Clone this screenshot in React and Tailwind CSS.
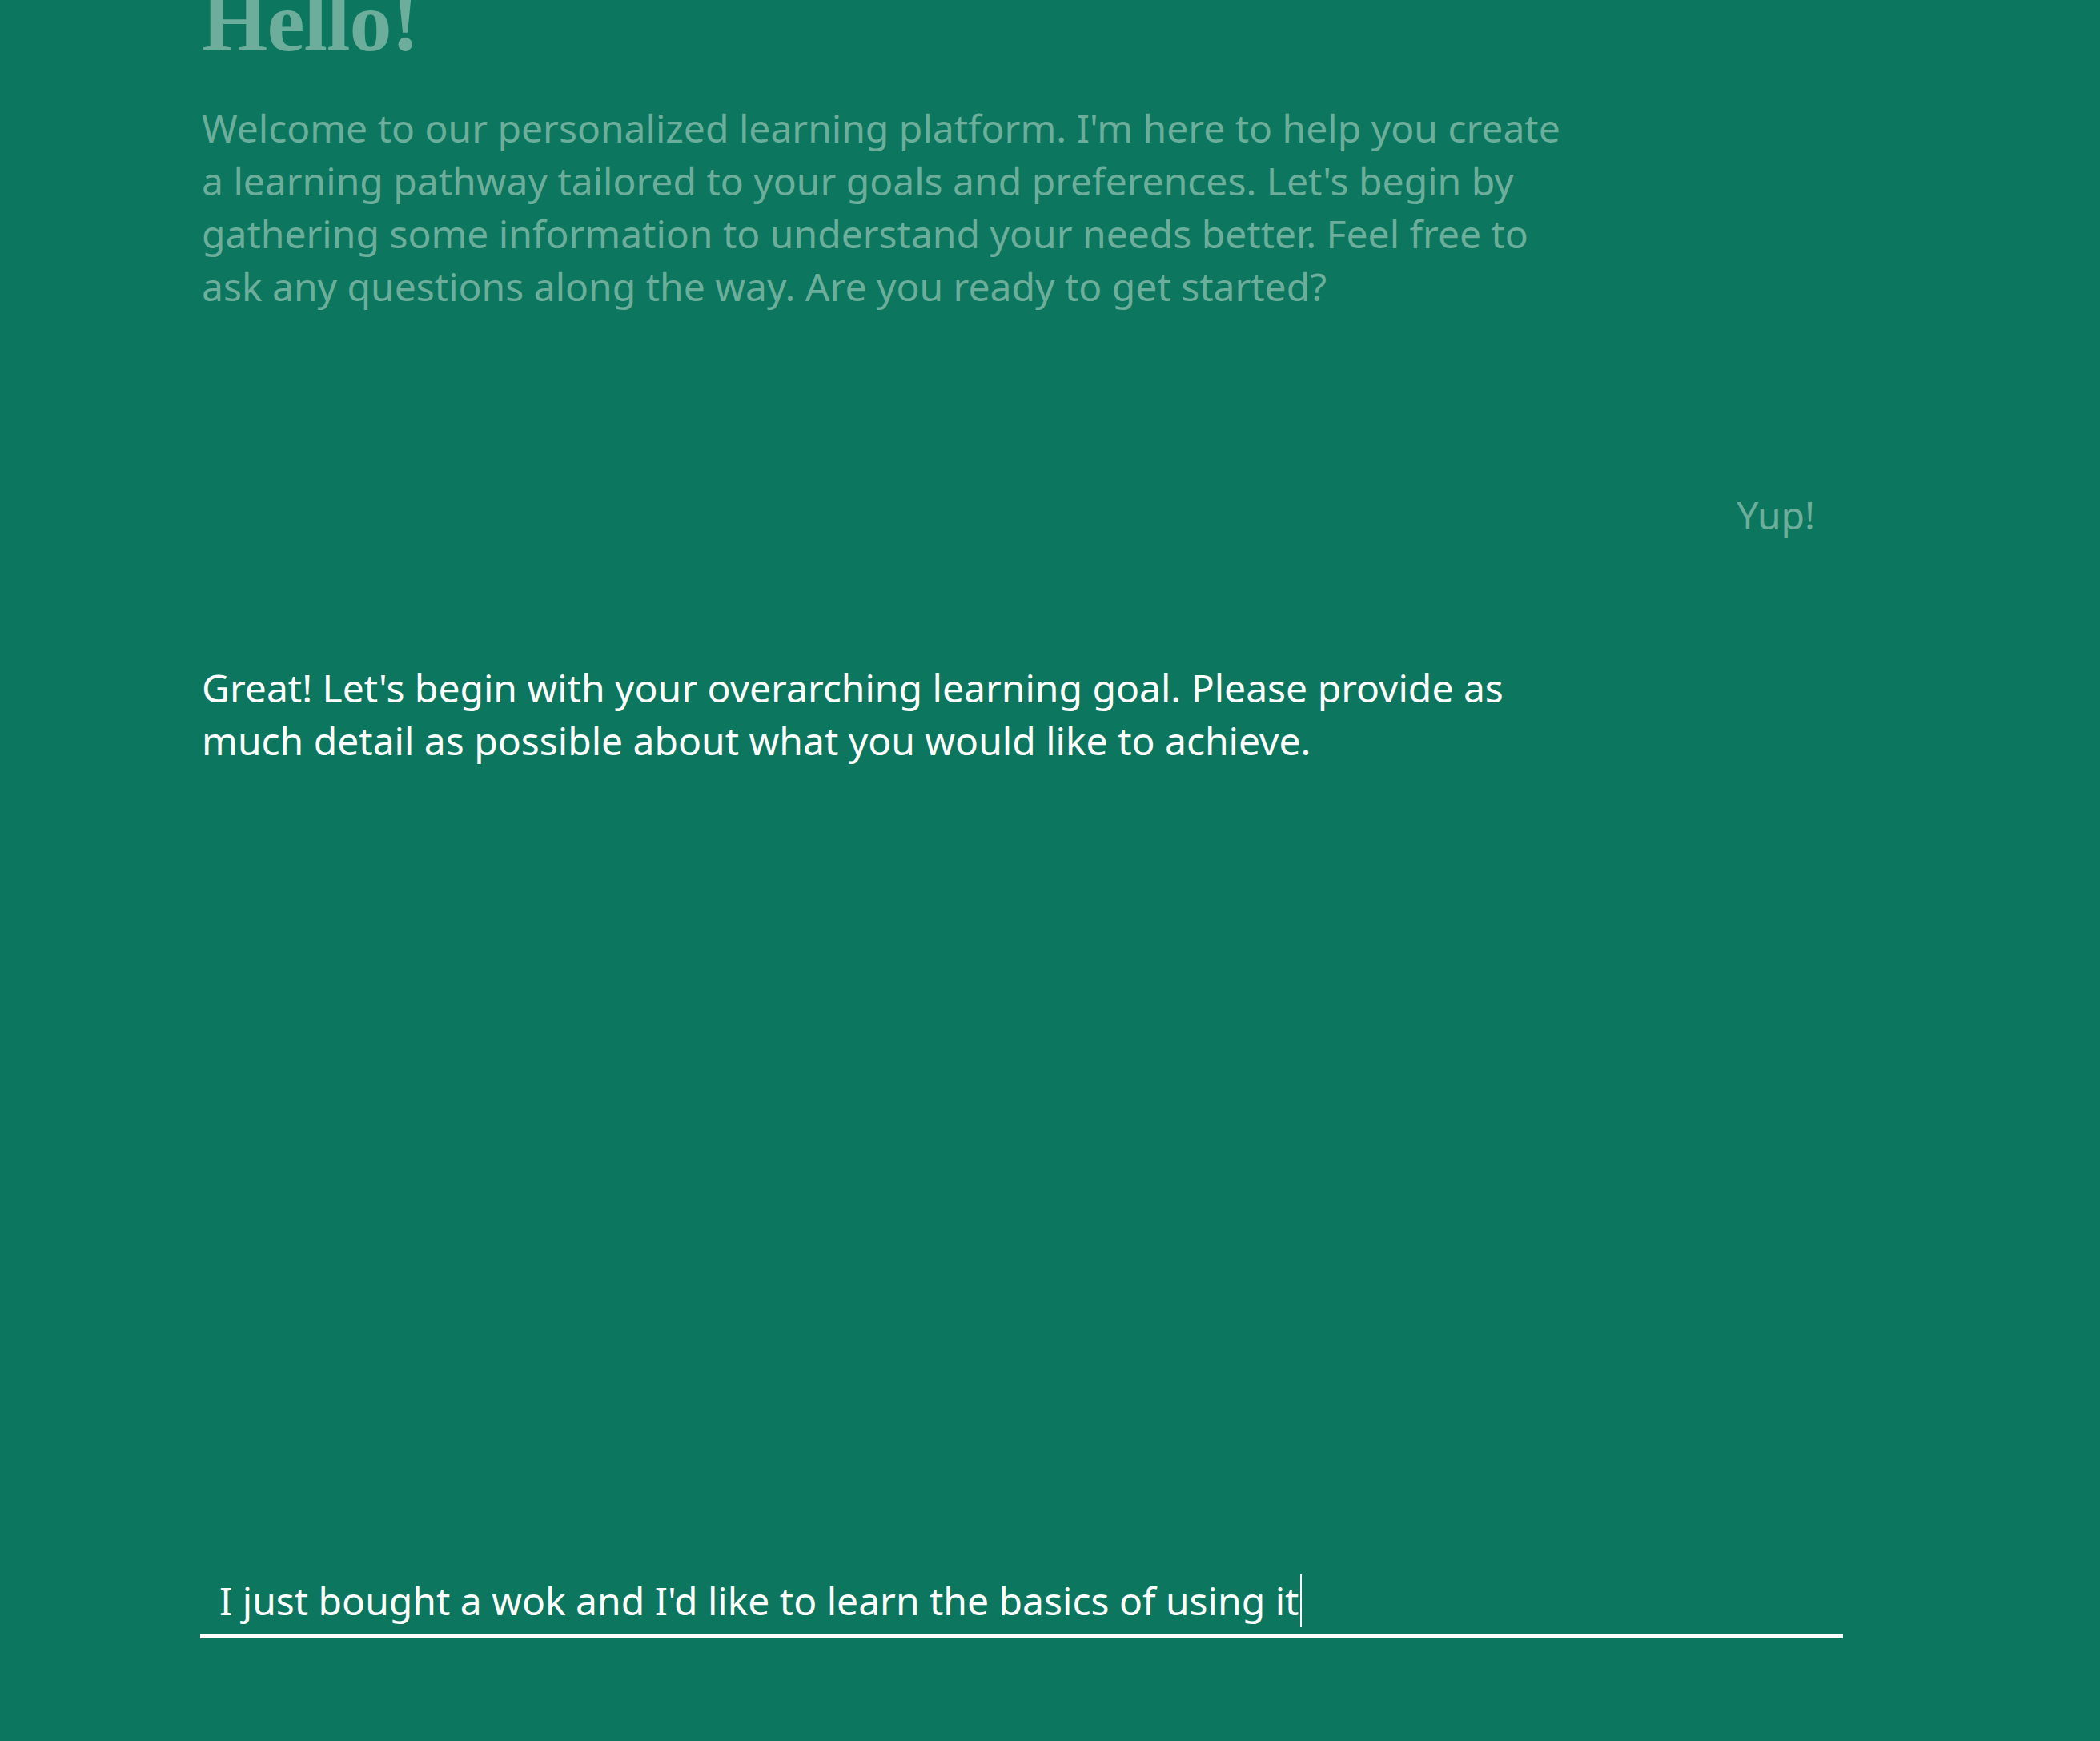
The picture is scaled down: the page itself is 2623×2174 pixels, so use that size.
import React from 'react';

const messages = [
  {
    from: 'bot',
    faded: true,
    text: "Welcome to our personalized learning platform. I'm here to help you create a learning pathway tailored to your goals and preferences. Let's begin by gathering some information to understand your needs better. Feel free to ask any questions along the way. Are you ready to get started?",
  },
  { from: 'user', faded: true, text: 'Yup!' },
  {
    from: 'bot',
    faded: false,
    text: "Great! Let's begin with your overarching learning goal. Please provide as much detail as possible about what you would like to achieve.",
  },
];

const App = () => {
  return (
    <div className="w-full h-[2174px] bg-[#0c775e] overflow-hidden font-['Noto_Sans',sans-serif]">
      <div className="ml-[250px] w-[2052px] h-full flex flex-col justify-between pb-[128px]">
        {/* chat history */}
        <div className="flex flex-col pl-[2px]">
          <h1 className="mt-[-25px] text-[106px] leading-[106px] font-bold text-[#6cae9b] font-['Liberation_Serif',serif] tracking-[-1px]">
            Hello!
          </h1>

          <p className="mt-[46px] max-w-[1715px] text-[48px] leading-[66px] text-[#6cae9b]">
            {messages[0].text}
          </p>

          <div className="mt-[219px] flex justify-end pr-[35px]">
            <p className="text-[48px] leading-[66px] text-[#6cae9b]">{messages[1].text}</p>
          </div>

          <p className="mt-[150px] max-w-[1715px] text-[48px] leading-[66px] text-white">
            {messages[2].text}
          </p>
        </div>

        {/* answer input */}
        <div className="border-b-[6px] border-white px-[24px] pb-[8px] flex items-center">
          <span className="text-[48px] leading-[66px] text-white whitespace-nowrap">
            I just bought a wok and I'd like to learn the basics of using it
          </span>
          <span className="inline-block w-[2px] h-[66px] bg-white ml-[2px]" />
        </div>
      </div>
    </div>
  );
};

export default App;
